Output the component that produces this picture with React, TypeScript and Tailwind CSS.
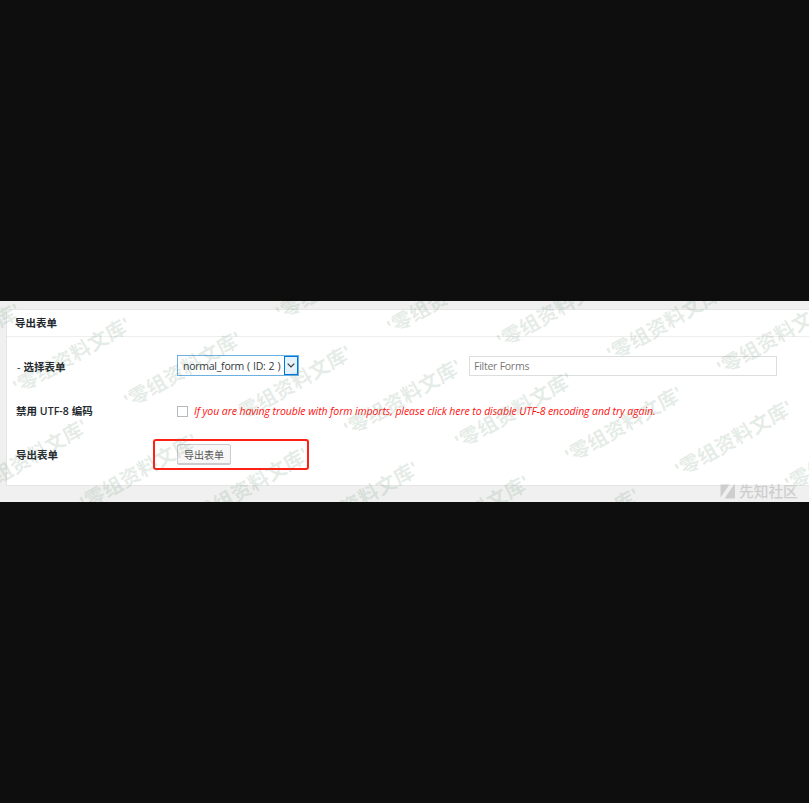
const MARKS: [number, number][] = [
  [334, 280], [445, 294], [555, 308], [665, 321], [775, 335],
  [-39, 340], [71, 354], [182, 368], [292, 382], [402, 396], [513, 409], [623, 423], [733, 437], [843, 451],
  [28, 456], [138, 470], [249, 484], [359, 498], [470, 512], [580, 525],
];

function Watermarks() {
  return (
    <div className="pointer-events-none absolute inset-0 overflow-hidden" aria-hidden="true">
      {MARKS.map(([x, y]) => (
        <span
          key={`${x}-${y}`}
          className="absolute -translate-x-1/2 -translate-y-1/2 -rotate-30 text-[20px] leading-none font-bold tracking-[0.2px] whitespace-nowrap text-[#5a8a66]/[0.17]"
          style={{ left: x + 1, top: y - 299 }}
        >
          '零组资料文库'
        </span>
      ))}
    </div>
  );
}

function CommunityBrand() {
  return (
    <div className="absolute top-[182px] left-[720px] flex items-center gap-[3px] text-[#cecece]">
      <svg className="h-[15px] w-4" viewBox="0 0 16 15" fill="currentColor">
        <path d="M0.5 0.5H9.5L0.5 13.5ZM15 0.5V14.5H4.5L14 0.5Z" />
      </svg>
      <span className="text-[14.7px] leading-[17px] font-medium">先知社区</span>
    </div>
  );
}

export default function App() {
  return (
    <div className="flex h-[803px] w-[809px] flex-col overflow-hidden bg-[#0e0e0e] pt-[301px] font-['Open_Sans','Noto_Sans_CJK_SC',sans-serif] text-[10.5px] text-[#23282d]">
      <main className="relative h-[201px] overflow-hidden bg-[#f0f0f0] pt-2 pl-1.5">
        <section className="h-[177px] w-[820px] border border-[#e5e5e5] bg-white">
          <h2 className="flex h-[27px] items-center border-b border-[#eee] pt-0.5 pl-2 text-[10.5px] font-bold">导出表单</h2>
          <div className="flex h-[58px] items-center pl-2.5">
            <div className="w-40 pt-[3px] font-bold"><span className="font-normal [word-spacing:0.5px]">- </span>选择表单</div>
            <div className="mb-px flex h-[21px] w-[122px] items-stretch border border-[#6cb0e4] bg-white">
              <span className="w-[106px] pl-[5px] leading-5 tracking-[-0.25px] whitespace-nowrap text-[#32373c] [word-spacing:0.6px]">normal_form ( ID: 2 )</span>
              <span className="flex w-3.5 shrink-0 items-center justify-center border border-[#0078d7] bg-[#e5f1fb]">
                <svg className="h-[5px] w-2" viewBox="0 0 8 5" fill="none" stroke="#333" strokeWidth="1.1"><path d="M0.7 0.7L4 4L7.3 0.7" /></svg>
              </span>
            </div>
            <input className="ml-[170px] h-5 w-[308px] border border-[#ddd] bg-white pl-1 text-[10.5px] tracking-[-0.25px] outline-none placeholder:text-[#777]" placeholder="Filter Forms" />
          </div>
          <div className="flex h-8 items-center pl-[9px]">
            <div className="w-[161px] pt-0.5 font-bold">禁用 <span className="font-semibold tracking-[0.1px]">UTF-8</span> 编码</div>
            <span className="h-[11px] w-[11px] border border-[#b4b9be] bg-white" />
            <em className="ml-1.5 pt-0.5 tracking-[-0.085px] whitespace-nowrap text-[#ff1010]">If you are having trouble with form imports, please click here to disable UTF-8 encoding and try again.</em>
          </div>
          <div className="flex h-[54px] items-center pl-[9px]">
            <div className="w-[137px] pt-[3px] font-bold">导出表单</div>
            <div className="flex h-[31px] w-[156px] items-center rounded-[3px] border-2 border-[#ff2015] pl-[22px]">
              <button className="h-[20px] w-[54px] rounded-[2px] border border-[#ccc] bg-[#f7f7f7] text-[10px] leading-[20px] text-[#555] shadow-[0_1px_0_#ccc]">导出表单</button>
            </div>
          </div>
        </section>
        <Watermarks />
        <CommunityBrand />
      </main>
    </div>
  );
}
